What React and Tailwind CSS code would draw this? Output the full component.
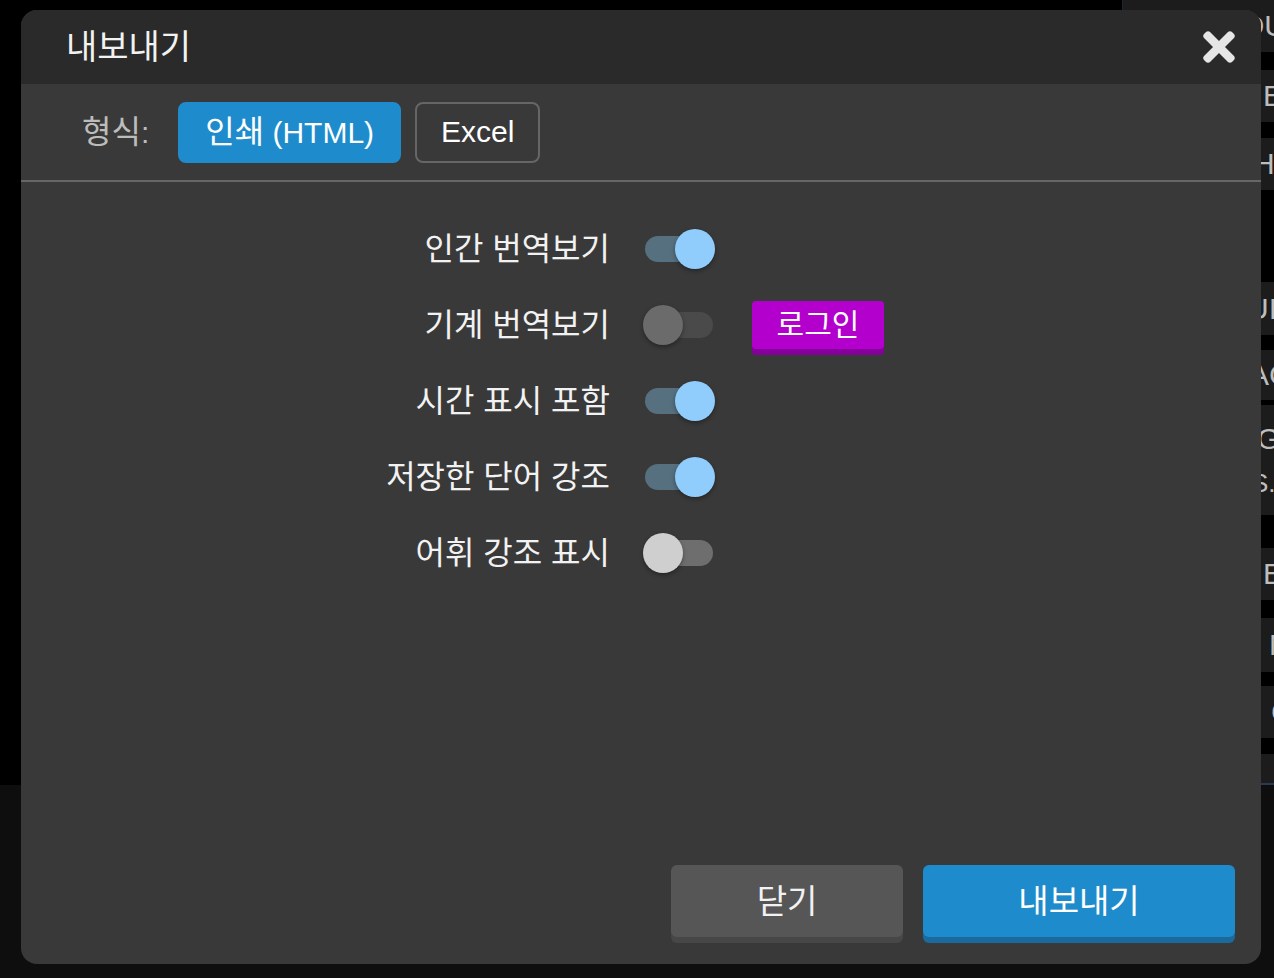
import React from 'react';
import { FaTimes } from 'react-icons/fa';

const options = [
	{ label: '인간 번역보기', on: true },
	{ label: '기계 번역보기', on: false, disabled: true, login: true },
	{ label: '시간 표시 포함', on: true },
	{ label: '저장한 단어 강조', on: true },
	{ label: '어휘 강조 표시', on: false }
];

const sideRows = [
	{ h: 'h-[52px]', mt: 'mt-0', text: 'OU', pl: 'pl-[118px]' },
	{ h: 'h-[52px]', mt: 'mt-[18px]', text: 'E', pl: 'pl-[140px]' },
	{ h: 'h-[52px]', mt: 'mt-[16px]', text: 'H', pl: 'pl-[130px]' },
	{ h: 'h-[53px]', mt: 'mt-[92px]', text: 'UI', pl: 'pl-[124px]' },
	{ h: 'h-[50px]', mt: 'mt-[15px]', text: 'AC', pl: 'pl-[126px]' },
	{ h: 'h-[110px]', mt: 'mt-[5px]', text: 'G', pl: 'pl-[134px]' },
	{ h: 'h-[52px]', mt: 'mt-[33px]', text: 'E', pl: 'pl-[140px]' },
	{ h: 'h-[54px]', mt: 'mt-[18px]', text: 'N', pl: 'pl-[146px]' },
	{ h: 'h-[52px]', mt: 'mt-[14px]', text: 'C', pl: 'pl-[148px]' }
];

function Toggle({ on, disabled }) {
	let track = 'bg-[#6e6e6e]';
	let knob = 'bg-[#cfcfcf] left-0';
	if (on) {
		track = 'bg-[#56707f]';
		knob = 'bg-[#90cdfc] right-0';
	} else if (disabled) {
		track = 'bg-[#4a4a4a]';
		knob = 'bg-[#6b6b6b] left-0';
	}
	return (
		<div className="relative h-10 w-[72px]">
			<div className={`absolute left-[2px] right-[2px] top-[7px] h-[26px] rounded-full ${track}`}></div>
			<div className={`absolute top-0 h-10 w-10 rounded-full shadow-[0_2px_4px_rgba(0,0,0,0.35)] ${knob}`}></div>
		</div>
	);
}

export default function App() {
	return (
		<div className="relative h-[978px] w-full overflow-hidden bg-black font-['Liberation_Sans','Noto_Sans_CJK_KR',sans-serif]">
			<div className="flex h-[785px]">
				<div className="flex-1"></div>
				<div className="flex w-[152px] flex-col border-l border-[#1b2633]">
					{sideRows.map((r, i) => (
						<div
							key={i}
							className={`${r.h} ${r.mt} ${r.pl} flex items-center bg-[#1c1c1c] text-[30px] leading-none text-[#bdbdbd]`}
						>
							{r.text === 'G' ? (
								<div className="flex flex-col gap-4">
									<span>G</span>
									<span className="-ml-[6px] text-[26px]">S.</span>
								</div>
							) : (
								r.text
							)}
						</div>
					))}
					<div className="mt-[16px] flex-1 border-b-2 border-[#2b3a52] bg-[#1c1c1c] pl-[128px] text-[22px] leading-none text-[#bdbdbd]">
						&#39;
					</div>
				</div>
			</div>
			<div className="h-[193px] bg-[#0e0e0e]"></div>

			{/* dialog */}
			<div className="absolute left-[21px] top-[10px] flex h-[954px] w-[1240px] flex-col overflow-hidden rounded-[16px] bg-[#393939]">
				<div className="flex h-[74px] shrink-0 items-center justify-between bg-[#2a2a2a] pl-[45px] pr-[26px]">
					<div className="text-[34px] leading-none text-[#f2f2f2]">내보내기</div>
					<FaTimes size={46} className="-mr-[7px] text-[#e6e6e6]" />
				</div>

				<div className="flex h-[98px] shrink-0 items-center border-b-2 border-[#676767] pl-[61px]">
					<span className="mr-[29px] text-[32px] leading-none text-[#bcbcbc]">
						형식<span className="text-[30px]">:</span>
					</span>
					<button className="h-[61px] rounded-lg border-2 border-[#1e8ccc] bg-[#1e8ccc] px-[25px] text-[30px] leading-none text-white">
						<span className="text-[32px]">인쇄</span> (HTML)
					</button>
					<button className="ml-[14px] h-[61px] rounded-lg border-2 border-[#666666] px-6 text-[30px] leading-none text-white">
						Excel
					</button>
				</div>

				<div className="flex flex-col pt-[29px]">
					{options.map((o) => (
						<div key={o.label} className="grid h-[76px] grid-cols-[589px_72px_auto] items-center">
							<div className="text-right text-[32px] leading-none text-[#f2f2f2]">{o.label}</div>
							<div className="ml-[33px]">
								<Toggle on={o.on} disabled={o.disabled} />
							</div>
							<div className="ml-[70px]">
								{o.login ? (
									<button className="h-12 w-[132px] rounded bg-[#b300cc] text-[30px] leading-none text-white shadow-[0_6px_0_#85009a]">
										로그인
									</button>
								) : null}
							</div>
						</div>
					))}
				</div>

				<div className="flex-1"></div>

				<div className="flex justify-end gap-5 pb-[27px] pr-[26px]">
					<button className="h-[72px] w-[232px] rounded-md bg-[#565656] text-[33px] leading-none text-[#f2f2f2] shadow-[0_6px_0_#474747]">
						닫기
					</button>
					<button className="h-[72px] w-[312px] rounded-md bg-[#1e8ccc] text-[33px] leading-none text-white shadow-[0_6px_0_#1a6a9e]">
						내보내기
					</button>
				</div>
			</div>
		</div>
	);
}
